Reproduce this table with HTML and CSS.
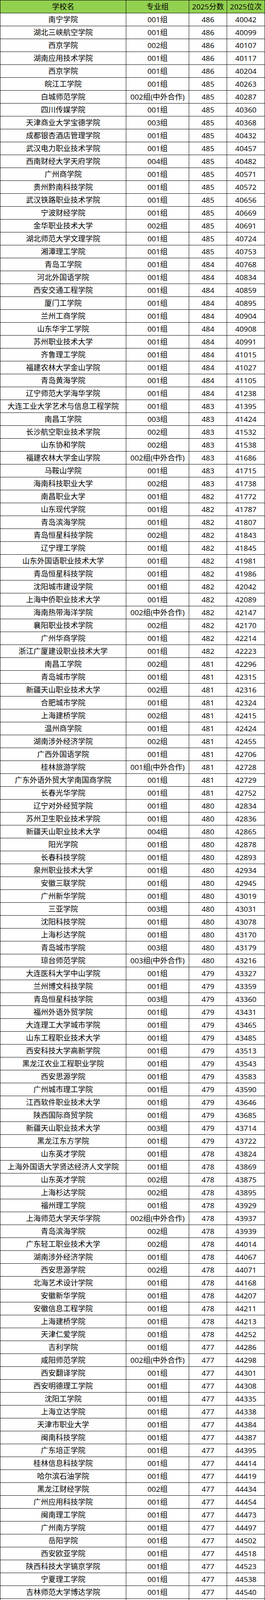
FILE: index.html
```html
<!DOCTYPE html>
<html lang="zh-CN">
<head>
<meta charset="utf-8">
<title>2025 分数位次</title>
<link rel="stylesheet" href="styles.css">
</head>
<body>
<div class="sheet">
<div class="row head"><div>学校名</div><div>专业组</div><div>2025分数</div><div>2025位次</div></div>
<div class="row"><div>南宁学院</div><div>001组</div><div>486</div><div>40042</div></div>
<div class="row"><div>湖北三峡航空学院</div><div>001组</div><div>486</div><div>40099</div></div>
<div class="row"><div>西京学院</div><div>002组</div><div>486</div><div>40107</div></div>
<div class="row"><div>湖南应用技术学院</div><div>001组</div><div>486</div><div>40117</div></div>
<div class="row"><div>西京学院</div><div>001组</div><div>486</div><div>40204</div></div>
<div class="row"><div>皖江工学院</div><div>001组</div><div>485</div><div>40263</div></div>
<div class="row"><div>白城师范学院</div><div>002组(中外合作)</div><div>485</div><div>40287</div></div>
<div class="row"><div>四川传媒学院</div><div>001组</div><div>485</div><div>40360</div></div>
<div class="row"><div>天津商业大学宝德学院</div><div>003组</div><div>485</div><div>40368</div></div>
<div class="row"><div>成都银杏酒店管理学院</div><div>001组</div><div>485</div><div>40432</div></div>
<div class="row"><div>武汉电力职业技术学院</div><div>001组</div><div>485</div><div>40457</div></div>
<div class="row"><div>西南财经大学天府学院</div><div>004组</div><div>485</div><div>40482</div></div>
<div class="row"><div>广州商学院</div><div>001组</div><div>485</div><div>40571</div></div>
<div class="row"><div>贵州黔南科技学院</div><div>001组</div><div>485</div><div>40572</div></div>
<div class="row"><div>武汉铁路职业技术学院</div><div>001组</div><div>485</div><div>40656</div></div>
<div class="row"><div>宁波财经学院</div><div>001组</div><div>485</div><div>40669</div></div>
<div class="row"><div>金华职业技术大学</div><div>002组</div><div>485</div><div>40691</div></div>
<div class="row"><div>湖北师范大学文理学院</div><div>001组</div><div>485</div><div>40724</div></div>
<div class="row"><div>湘潭理工学院</div><div>001组</div><div>485</div><div>40753</div></div>
<div class="row"><div>青岛工学院</div><div>001组</div><div>484</div><div>40768</div></div>
<div class="row"><div>河北外国语学院</div><div>001组</div><div>484</div><div>40834</div></div>
<div class="row"><div>西安交通工程学院</div><div>001组</div><div>484</div><div>40859</div></div>
<div class="row"><div>厦门工学院</div><div>001组</div><div>484</div><div>40895</div></div>
<div class="row"><div>兰州工商学院</div><div>001组</div><div>484</div><div>40904</div></div>
<div class="row"><div>山东华宇工学院</div><div>001组</div><div>484</div><div>40908</div></div>
<div class="row"><div>苏州职业技术大学</div><div>001组</div><div>484</div><div>40991</div></div>
<div class="row"><div>齐鲁理工学院</div><div>001组</div><div>484</div><div>41015</div></div>
<div class="row"><div>福建农林大学金山学院</div><div>001组</div><div>484</div><div>41027</div></div>
<div class="row"><div>青岛黄海学院</div><div>001组</div><div>484</div><div>41105</div></div>
<div class="row"><div>辽宁师范大学海华学院</div><div>001组</div><div>484</div><div>41238</div></div>
<div class="row"><div>大连工业大学艺术与信息工程学院</div><div>001组</div><div>483</div><div>41395</div></div>
<div class="row"><div>南昌工学院</div><div>003组</div><div>483</div><div>41424</div></div>
<div class="row"><div>长沙航空职业技术学院</div><div>002组</div><div>483</div><div>41532</div></div>
<div class="row"><div>山东协和学院</div><div>002组</div><div>483</div><div>41538</div></div>
<div class="row"><div>福建农林大学金山学院</div><div>002组(中外合作)</div><div>483</div><div>41686</div></div>
<div class="row"><div>马鞍山学院</div><div>001组</div><div>483</div><div>41715</div></div>
<div class="row"><div>海南科技职业大学</div><div>002组</div><div>483</div><div>41738</div></div>
<div class="row"><div>南昌职业大学</div><div>001组</div><div>482</div><div>41772</div></div>
<div class="row"><div>山东现代学院</div><div>001组</div><div>482</div><div>41787</div></div>
<div class="row"><div>青岛滨海学院</div><div>001组</div><div>482</div><div>41807</div></div>
<div class="row"><div>青岛恒星科技学院</div><div>002组</div><div>482</div><div>41843</div></div>
<div class="row"><div>辽宁理工学院</div><div>001组</div><div>482</div><div>41845</div></div>
<div class="row"><div>山东外国语职业技术大学</div><div>001组</div><div>482</div><div>41981</div></div>
<div class="row"><div>青岛恒星科技学院</div><div>001组</div><div>482</div><div>41986</div></div>
<div class="row"><div>沈阳城市建设学院</div><div>001组</div><div>482</div><div>42042</div></div>
<div class="row"><div>上海中侨职业技术大学</div><div>001组</div><div>482</div><div>42089</div></div>
<div class="row"><div>海南热带海洋学院</div><div>002组(中外合作)</div><div>482</div><div>42147</div></div>
<div class="row"><div>襄阳职业技术学院</div><div>002组</div><div>482</div><div>42170</div></div>
<div class="row"><div>广州华商学院</div><div>001组</div><div>482</div><div>42214</div></div>
<div class="row"><div>浙江广厦建设职业技术大学</div><div>001组</div><div>482</div><div>42223</div></div>
<div class="row"><div>南昌工学院</div><div>002组</div><div>481</div><div>42296</div></div>
<div class="row"><div>青岛城市学院</div><div>001组</div><div>481</div><div>42315</div></div>
<div class="row"><div>新疆天山职业技术大学</div><div>002组</div><div>481</div><div>42316</div></div>
<div class="row"><div>合肥城市学院</div><div>001组</div><div>481</div><div>42324</div></div>
<div class="row"><div>上海建桥学院</div><div>002组</div><div>481</div><div>42415</div></div>
<div class="row"><div>温州商学院</div><div>001组</div><div>481</div><div>42424</div></div>
<div class="row"><div>湖南涉外经济学院</div><div>002组</div><div>481</div><div>42455</div></div>
<div class="row"><div>广西外国语学院</div><div>001组</div><div>481</div><div>42706</div></div>
<div class="row"><div>桂林旅游学院</div><div>001组(中外合作)</div><div>481</div><div>42728</div></div>
<div class="row"><div>广东外语外贸大学南国商学院</div><div>001组</div><div>481</div><div>42729</div></div>
<div class="row"><div>长春光华学院</div><div>001组</div><div>481</div><div>42752</div></div>
<div class="row"><div>辽宁对外经贸学院</div><div>001组</div><div>480</div><div>42834</div></div>
<div class="row"><div>苏州卫生职业技术学院</div><div>001组</div><div>480</div><div>42836</div></div>
<div class="row"><div>新疆天山职业技术大学</div><div>004组</div><div>480</div><div>42865</div></div>
<div class="row"><div>阳光学院</div><div>001组</div><div>480</div><div>42878</div></div>
<div class="row"><div>长春科技学院</div><div>001组</div><div>480</div><div>42893</div></div>
<div class="row"><div>泉州职业技术大学</div><div>001组</div><div>480</div><div>42934</div></div>
<div class="row"><div>安徽三联学院</div><div>001组</div><div>480</div><div>42945</div></div>
<div class="row"><div>广州新华学院</div><div>001组</div><div>480</div><div>43019</div></div>
<div class="row"><div>三亚学院</div><div>003组</div><div>480</div><div>43031</div></div>
<div class="row"><div>沈阳科技学院</div><div>001组</div><div>480</div><div>43078</div></div>
<div class="row"><div>上海杉达学院</div><div>001组</div><div>480</div><div>43170</div></div>
<div class="row"><div>青岛城市学院</div><div>003组</div><div>480</div><div>43179</div></div>
<div class="row"><div>琼台师范学院</div><div>003组(中外合作)</div><div>480</div><div>43216</div></div>
<div class="row"><div>大连医科大学中山学院</div><div>001组</div><div>479</div><div>43327</div></div>
<div class="row"><div>兰州博文科技学院</div><div>001组</div><div>479</div><div>43359</div></div>
<div class="row"><div>青岛恒星科技学院</div><div>003组</div><div>479</div><div>43360</div></div>
<div class="row"><div>福州外语外贸学院</div><div>001组</div><div>479</div><div>43431</div></div>
<div class="row"><div>大连理工大学城市学院</div><div>001组</div><div>479</div><div>43465</div></div>
<div class="row"><div>山东工程职业技术大学</div><div>001组</div><div>479</div><div>43485</div></div>
<div class="row"><div>西安科技大学高新学院</div><div>001组</div><div>479</div><div>43513</div></div>
<div class="row"><div>黑龙江农业工程职业学院</div><div>001组</div><div>479</div><div>43543</div></div>
<div class="row"><div>西安思源学院</div><div>001组</div><div>479</div><div>43583</div></div>
<div class="row"><div>广州城市理工学院</div><div>001组</div><div>479</div><div>43590</div></div>
<div class="row"><div>江西软件职业技术大学</div><div>001组</div><div>479</div><div>43646</div></div>
<div class="row"><div>陕西国际商贸学院</div><div>001组</div><div>479</div><div>43685</div></div>
<div class="row"><div>新疆天山职业技术大学</div><div>003组</div><div>479</div><div>43714</div></div>
<div class="row"><div>黑龙江东方学院</div><div>001组</div><div>479</div><div>43722</div></div>
<div class="row"><div>山东英才学院</div><div>001组</div><div>478</div><div>43824</div></div>
<div class="row"><div>上海外国语大学贤达经济人文学院</div><div>001组</div><div>478</div><div>43869</div></div>
<div class="row"><div>山东英才学院</div><div>002组</div><div>478</div><div>43875</div></div>
<div class="row"><div>上海杉达学院</div><div>002组</div><div>478</div><div>43895</div></div>
<div class="row"><div>福州理工学院</div><div>001组</div><div>478</div><div>43929</div></div>
<div class="row"><div>上海师范大学天华学院</div><div>002组(中外合作)</div><div>478</div><div>43937</div></div>
<div class="row"><div>青岛滨海学院</div><div>002组</div><div>478</div><div>43939</div></div>
<div class="row"><div>广东轻工职业技术大学</div><div>002组</div><div>478</div><div>44014</div></div>
<div class="row"><div>湖南涉外经济学院</div><div>001组</div><div>478</div><div>44067</div></div>
<div class="row"><div>西安思源学院</div><div>002组</div><div>478</div><div>44071</div></div>
<div class="row"><div>北海艺术设计学院</div><div>001组</div><div>478</div><div>44168</div></div>
<div class="row"><div>安徽新华学院</div><div>001组</div><div>478</div><div>44207</div></div>
<div class="row"><div>安徽信息工程学院</div><div>001组</div><div>478</div><div>44211</div></div>
<div class="row"><div>上海建桥学院</div><div>001组</div><div>478</div><div>44213</div></div>
<div class="row"><div>天津仁爱学院</div><div>001组</div><div>478</div><div>44252</div></div>
<div class="row"><div>吉利学院</div><div>001组</div><div>477</div><div>44286</div></div>
<div class="row"><div>咸阳师范学院</div><div>002组(中外合作)</div><div>477</div><div>44298</div></div>
<div class="row"><div>西安翻译学院</div><div>001组</div><div>477</div><div>44301</div></div>
<div class="row"><div>西安明德理工学院</div><div>001组</div><div>477</div><div>44308</div></div>
<div class="row"><div>沈阳工学院</div><div>001组</div><div>477</div><div>44335</div></div>
<div class="row"><div>上海立达学院</div><div>001组</div><div>477</div><div>44338</div></div>
<div class="row"><div>天津市职业大学</div><div>001组</div><div>477</div><div>44384</div></div>
<div class="row"><div>闽南科技学院</div><div>001组</div><div>477</div><div>44387</div></div>
<div class="row"><div>广东培正学院</div><div>001组</div><div>477</div><div>44395</div></div>
<div class="row"><div>桂林信息科技学院</div><div>001组</div><div>477</div><div>44414</div></div>
<div class="row"><div>哈尔滨石油学院</div><div>001组</div><div>477</div><div>44419</div></div>
<div class="row"><div>黑龙江财经学院</div><div>002组</div><div>477</div><div>44434</div></div>
<div class="row"><div>广州应用科技学院</div><div>001组</div><div>477</div><div>44454</div></div>
<div class="row"><div>闽南理工学院</div><div>001组</div><div>477</div><div>44473</div></div>
<div class="row"><div>广州南方学院</div><div>001组</div><div>477</div><div>44497</div></div>
<div class="row"><div>岳阳学院</div><div>001组</div><div>477</div><div>44502</div></div>
<div class="row"><div>西安欧亚学院</div><div>001组</div><div>477</div><div>44518</div></div>
<div class="row"><div>陕西科技大学镐京学院</div><div>001组</div><div>477</div><div>44523</div></div>
<div class="row"><div>宁夏理工学院</div><div>001组</div><div>477</div><div>44538</div></div>
<div class="row"><div>吉林师范大学博达学院</div><div>001组</div><div>477</div><div>44540</div></div>
<div class="row"><div>三亚学院</div><div>001组</div><div>477</div><div>44552</div></div>
<div class="row"><div>吉林外国语大学</div><div>001组</div><div>477</div><div>44553</div></div>
<div class="row"><div>天津天狮学院</div><div>001组</div><div>477</div><div>44554</div></div>
<div class="row"><div>哈尔滨广厦学院</div><div>001组</div><div>477</div><div>44563</div></div>
<div class="row"><div>泉州信息工程学院</div><div>001组</div><div>477</div><div>44566</div></div>
<div class="row"><div>西安汽车职业大学</div><div>001组</div><div>477</div><div>44570</div></div>
<div class="row"><div>长春财经学院</div><div>001组</div><div>477</div><div>44578</div></div>
<div class="row"><div>广州华立学院</div><div>001组</div><div>477</div><div>44579</div></div>
<div class="row"><div>黑龙江工程学院昆仑旅游学院</div><div>001组</div><div>477</div><div>44594</div></div>
<div class="row"><div>江西服装学院</div><div>001组</div><div>477</div><div>44600</div></div>
<div class="row"><div>福州工商学院</div><div>001组</div><div>477</div><div>44612</div></div>
<div class="row"><div>广州民航职业技术学院</div><div>001组</div><div>477</div><div>44620</div></div>
<div class="row"><div>西安外事学院</div><div>001组</div><div>477</div><div>44652</div></div>
<div class="row"><div>广州理工学院</div><div>001组</div><div>477</div><div>44657</div></div>
<div class="row"><div>柳州工学院</div><div>001组</div><div>477</div><div>44659</div></div>
<div class="row"><div>广东白云学院</div><div>001组</div><div>477</div><div>44664</div></div>
<div class="row"><div>泰山科技学院</div><div>001组</div><div>477</div><div>44666</div></div>
<div class="row"><div>上海师范大学天华学院</div><div>001组</div><div>477</div><div>44667</div></div>
<div class="row"><div>黑龙江财经学院</div><div>001组</div><div>477</div><div>44679</div></div>
<div class="row"><div>江西应用科技学院</div><div>001组</div><div>477</div><div>44682</div></div>
<div class="row"><div>丽江文化旅游学院</div><div>001组</div><div>477</div><div>44685</div></div>
<div class="row"><div>浙江越秀外国语学院</div><div>002组(中外合作)</div><div>477</div><div>44692</div></div>
<div class="row"><div>长沙卫生职业学院</div><div>002组</div><div>477</div><div>44699</div></div>
<div class="row"><div>广西城市职业大学</div><div>001组</div><div>477</div><div>44705</div></div>
<div class="row"><div>长春工业大学人文信息学院</div><div>001组</div><div>477</div><div>44708</div></div>
<div class="row"><div>大连东软信息学院</div><div>001组</div><div>477</div><div>44721</div></div>
<div class="row"><div>武汉传媒学院</div><div>001组</div><div>477</div><div>44738</div></div>
<div class="row"><div>浙江越秀外国语学院</div><div>001组</div><div>477</div><div>44743</div></div>
<div class="row"><div>安徽外国语学院</div><div>001组</div><div>477</div><div>44745</div></div>
<div class="row"><div>安徽文达信息工程学院</div><div>001组</div><div>477</div><div>44750</div></div>
<div class="row"><div>南京机电职业技术学院</div><div>001组</div><div>476</div><div>44899</div></div>
<div class="row"><div>襄阳职业技术学院</div><div>001组</div><div>476</div><div>44908</div></div>
<div class="row"><div>浙江警官职业学院</div><div>001组</div><div>475</div><div>45277</div></div>
<div class="row"><div>上海工艺美术职业学院</div><div>001组</div><div>475</div><div>45555</div></div>
<div class="row"><div>苏州职业技术大学</div><div>002组(中外合作)</div><div>475</div><div>45732</div></div>
<div class="row"><div>石家庄铁路职业技术学院</div><div>001组</div><div>474</div><div>45808</div></div>
<div class="row"><div>浙江经济职业技术学院</div><div>001组</div><div>474</div><div>46216</div></div>
<div class="row"><div>江苏城市职业学院</div><div>001组</div><div>473</div><div>46315</div></div>
<div class="row"><div>长沙卫生职业学院</div><div>001组</div><div>473</div><div>46742</div></div>
<div class="row"><div>宁波职业技术大学</div><div>001组</div><div>473</div><div>46768</div></div>
<div class="row"><div>北京科技职业大学</div><div>001组</div><div>472</div><div>46797</div></div>
<div class="row"><div>广元中核职业技术学院</div><div>001组</div><div>472</div><div>46800</div></div>
<div class="row"><div>沧州医学高等专科学校</div><div>002组</div><div>472</div><div>46837</div></div>
<div class="row"><div>重庆电力高等专科学校</div><div>001组</div><div>472</div><div>47013</div></div>
<div class="row"><div>湖南高速铁路职业技术学院</div><div>001组</div><div>472</div><div>47059</div></div>
<div class="row"><div>浙江警官职业学院</div><div>002组</div><div>472</div><div>47200</div></div>
<div class="row"><div>湖南铁道职业技术学院</div><div>001组</div><div>471</div><div>47306</div></div>
<div class="row"><div>江苏经贸职业技术学院</div><div>001组</div><div>471</div><div>47317</div></div>
<div class="row"><div>江苏农牧科技职业学院</div><div>001组</div><div>469</div><div>48306</div></div>
<div class="row"><div>连云港师范学院</div><div>002组</div><div>469</div><div>48436</div></div>
<div class="row"><div>江苏卫生健康职业学院</div><div>001组</div><div>469</div><div>48457</div></div>
<div class="row"><div>浙江经贸职业技术学院</div><div>001组</div><div>469</div><div>48531</div></div>
<div class="row"><div>芜湖职业技术大学</div><div>001组</div><div>469</div><div>48570</div></div>
<div class="row"><div>长沙民政职业技术学院</div><div>001组</div><div>469</div><div>48663</div></div>
<div class="row"><div>浙江邮电职业技术学院</div><div>001组</div><div>469</div><div>48728</div></div>
<div class="row"><div>山东职业学院</div><div>001组</div><div>469</div><div>48754</div></div>
<div class="row"><div>苏州农业职业技术学院</div><div>001组</div><div>468</div><div>49247</div></div>
<div class="row"><div>西安铁路职业技术学院</div><div>001组</div><div>467</div><div>49517</div></div>
<div class="row"><div>北京工业职业技术学院</div><div>001组</div><div>467</div><div>49666</div></div>
<div class="row"><div>汉江师范学院</div><div>002组</div><div>467</div><div>49791</div></div>
<div class="row"><div>福建电力职业技术学院</div><div>001组</div><div>466</div><div>49949</div></div>
</div>
</body>
</html>
```

FILE: styles.css
```css
html, body {
  margin: 0;
  padding: 0;
  background: #ffffff;
}

.sheet {
  width: 678px;
  box-sizing: border-box;
  border-top: 1px solid #000000;
  border-left: 1px solid #000000;
  font-family: "Open Sans", "Noto Sans CJK SC", sans-serif;
  font-size: 19px;
  color: #000000;
}

.row {
  display: grid;
  grid-template-columns: 322px 161px 97px 97px;
}

.row > div {
  box-sizing: border-box;
  height: 33px;
  border-right: 1px solid #000000;
  border-bottom: 1px solid #000000;
  line-height: 32px;
  text-align: center;
  white-space: nowrap;
  overflow: hidden;
}

.head > div {
  background: #92d050;
}
```
